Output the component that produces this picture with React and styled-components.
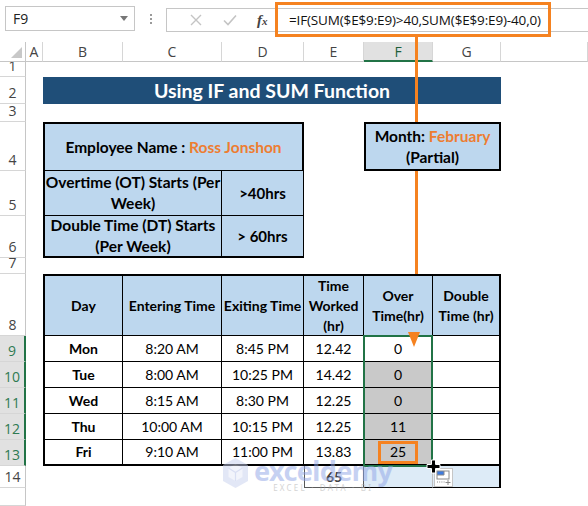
import React from 'react';
import styled, { createGlobalStyle } from 'styled-components';

const GlobalStyle = createGlobalStyle`
  html, body {
    margin: 0;
    padding: 0;
    background: #fff;
  }
  body {
    font-family: "Lato", "Open Sans", sans-serif;
  }
`;

const ORANGE = '#F58220';
const GREEN = '#217346';
const HEAD_BLUE = '#BDD7EE';
const THICK = '2px solid #000';
const THIN = '1px solid #000';

const Page = styled.div`
  position: relative;
  width: 588px;
  height: 506px;
  overflow: hidden;
  background: #fff;
`;

/* ---------- formula bar ---------- */

const FormulaBar = styled.div`
  height: 42px;
  display: flex;
  align-items: flex-start;
  padding-top: 6px;
  box-sizing: border-box;
  font-family: "Open Sans", "Noto Sans", sans-serif;
`;

const NameBox = styled.div`
  margin-left: 5px;
  width: 130px;
  height: 25px;
  box-sizing: border-box;
  border: 1px solid #C6C6C6;
  display: flex;
  align-items: center;
  justify-content: space-between;
  padding: 0 6px 0 7px;
  font-size: 14px;
  color: #222;
`;

const DropArrow = styled.span`
  width: 0;
  height: 0;
  border-left: 4px solid transparent;
  border-right: 4px solid transparent;
  border-top: 5px solid #777;
`;

const Grip = styled.div`
  width: 31px;
  height: 25px;
  display: flex;
  flex-direction: column;
  align-items: center;
  justify-content: center;
  gap: 2px;

  span {
    width: 2px;
    height: 2px;
    background: #9A9A9A;
  }
`;

const FxBox = styled.div`
  flex: 1;
  margin-top: 2px;
  height: 24px;
  box-sizing: border-box;
  border: 1px solid #C6C6C6;
  border-right: none;
  display: flex;
  align-items: center;
`;

const FxButtons = styled.div`
  width: 110px;
  display: flex;
  align-items: center;
  padding-left: 12px;
  box-sizing: border-box;
`;

const FxIcon = styled.span`
  width: ${p => p.$w}px;
  display: flex;
  justify-content: center;
  align-items: baseline;
  color: ${p => p.$color || '#C8C8C8'};
  font-family: "Liberation Serif", serif;
  font-style: italic;
  font-weight: 700;
  font-size: 15px;

  small {
    font-size: 11px;
  }
`;

const FormulaText = styled.div`
  flex: 1;
  height: 100%;
  display: flex;
  align-items: center;
  padding-left: 12px;
  font-family: "Open Sans", sans-serif;
  font-size: 13.5px;
  letter-spacing: -0.15px;
  color: #111;
`;

/* ---------- sheet grid ---------- */

const Sheet = styled.div`
  display: grid;
  grid-template-columns: 26px 17px 80px 99px 82px 60px 69px 68px 1fr;
  grid-template-rows: 20px 15px 27px 18px 49px 45px 42px 16px 62px repeat(5, 26px) 22px 1fr;
  height: 464px;
`;

const Corner = styled.div`
  grid-column: 1;
  grid-row: 1;
  border-right: 1px solid #C6C6C6;
  border-bottom: 1px solid #C6C6C6;
  position: relative;

  &::after {
    content: '';
    position: absolute;
    right: 3px;
    bottom: 3px;
    width: 0;
    height: 0;
    border-left: 11px solid transparent;
    border-bottom: 11px solid #C8C8C8;
  }
`;

const ColHead = styled.div`
  grid-column: ${p => p.$c};
  grid-row: 1;
  display: flex;
  align-items: center;
  justify-content: center;
  font-family: "Open Sans", sans-serif;
  font-size: 14px;
  color: ${p => (p.$active ? '#1E5E3A' : '#444')};
  background: ${p => (p.$active ? '#E1E1E1' : '#fff')};
  border-right: 1px solid #D6D6D6;
  border-bottom: ${p => (p.$active ? `2px solid ${GREEN}` : '1px solid #C6C6C6')};
  box-sizing: border-box;
`;

const RowHead = styled.div`
  grid-column: 1;
  grid-row: ${p => p.$r};
  display: flex;
  align-items: flex-end;
  justify-content: center;
  padding-bottom: 1px;
  font-family: "Open Sans", sans-serif;
  font-size: 14px;
  line-height: 18px;
  color: ${p => (p.$active ? '#2E7A52' : '#444')};
  background: ${p => (p.$active ? '#E1E1E1' : '#fff')};
  border-right: ${p => (p.$active ? `2px solid ${GREEN}` : '1px solid #C6C6C6')};
  border-bottom: 1px solid #D6D6D6;
  box-sizing: border-box;
`;

const Cell = styled.div`
  grid-column: ${p => p.$c} / span ${p => p.$cs || 1};
  grid-row: ${p => p.$r} / span ${p => p.$rs || 1};
  position: relative;
  display: flex;
  flex-direction: column;
  align-items: center;
  justify-content: center;
  text-align: center;
  white-space: nowrap;
  box-sizing: border-box;
  background: ${p => p.$bg || '#fff'};
  border-top: ${p => p.$bt || 'none'};
  border-left: ${p => p.$bl || 'none'};
  border-right: ${p => p.$br || THIN};
  border-bottom: ${p => p.$bb || THIN};
  font-size: ${p => p.$size || 14}px;
  line-height: ${p => (p.$size ? 21 : 20)}px;
  font-weight: ${p => (p.$bold ? 700 : 400)};
  color: ${p => p.$color || '#000'};
`;

const Title = styled.div`
  grid-column: 3 / span 6;
  grid-row: 3;
  background: #1F4E78;
  color: #fff;
  font-size: 19.5px;
  font-weight: 700;
  display: flex;
  align-items: center;
  justify-content: center;
`;

const Accent = styled.span`
  color: #ED7D31;
`;

const Selection = styled.div`
  grid-column: 7;
  grid-row: 10 / span 5;
  margin: -1px 0 -1px -1px;
  border: 2px solid ${GREEN};
  z-index: 3;
  pointer-events: none;
`;

const Highlight = styled.span`
  width: 40px;
  height: 23px;
  box-sizing: border-box;
  border: 3px solid ${ORANGE};
  display: flex;
  align-items: center;
  justify-content: center;
`;

/* ---------- overlays ---------- */

const OrangeFrame = styled.div`
  position: absolute;
  left: 275px;
  top: 2px;
  width: 276px;
  height: 35px;
  box-sizing: border-box;
  border: 3px solid ${ORANGE};
  z-index: 5;
`;

const Leader = styled.div`
  position: absolute;
  left: 415px;
  width: 3px;
  top: ${p => p.$top}px;
  height: ${p => p.$h}px;
  background: ${ORANGE};
  z-index: 5;
`;

const ArrowHead = styled.div`
  position: absolute;
  left: 408px;
  top: 332px;
  width: 0;
  height: 0;
  border-left: 6px solid transparent;
  border-right: 6px solid transparent;
  border-top: 15px solid ${ORANGE};
  z-index: 6;
`;

const Watermark = styled.div`
  position: absolute;
  left: 222px;
  top: 457px;
  display: flex;
  align-items: flex-start;
  gap: 5px;
  opacity: 0.5;
  z-index: 4;
  pointer-events: none;
`;

const WmText = styled.div`
  display: flex;
  flex-direction: column;
  align-items: center;
`;

const WmName = styled.span`
  font-family: "Noto Sans", sans-serif;
  font-weight: 700;
  font-size: 27px;
  line-height: 27px;
  color: #8FA4E6;
  letter-spacing: -0.6px;
`;

const WmTag = styled.span`
  font-family: "Noto Sans", sans-serif;
  font-size: 8px;
  line-height: 8px;
  letter-spacing: 2.2px;
  color: #A9A9A9;
`;

const FillCursor = styled.svg`
  position: absolute;
  left: 426px;
  top: 459px;
  z-index: 7;
`;

const QuickAnalysis = styled.svg`
  position: absolute;
  left: 434px;
  top: 468px;
  z-index: 6;
`;

const cols = ['A', 'B', 'C', 'D', 'E', 'F', 'G', ''];

const days = [
  ['Mon', '8:20 AM', '8:45 PM', '12.42', '0'],
  ['Tue', '8:00 AM', '10:25 PM', '14.42', '0'],
  ['Wed', '8:15 AM', '8:30 PM', '12.25', '0'],
  ['Thu', '10:00 AM', '10:15 PM', '12.25', '11'],
  ['Fri', '9:10 AM', '11:00 PM', '13.83', '25'],
];

const App = () => {
  return (
    <Page>
      <GlobalStyle />
      <FormulaBar>
        <NameBox>
          F9
          <DropArrow />
        </NameBox>
        <Grip>
          <span />
          <span />
          <span />
        </Grip>
        <FxBox>
          <FxButtons>
            <FxIcon $w={34}>
              <svg width="12" height="12" viewBox="0 0 12 12">
                <path d="M1 1 L11 11 M11 1 L1 11" stroke="#C4C4C4" strokeWidth="1.4" />
              </svg>
            </FxIcon>
            <FxIcon $w={36}>
              <svg width="14" height="12" viewBox="0 0 14 12">
                <path d="M1 6.5 L5 10.5 L13 1.5" stroke="#C4C4C4" strokeWidth="1.6" fill="none" />
              </svg>
            </FxIcon>
            <FxIcon $w={30} $color="#444">
              f<small>x</small>
            </FxIcon>
          </FxButtons>
          <FormulaText>=IF(SUM($E$9:E9)&gt;40,SUM($E$9:E9)-40,0)</FormulaText>
        </FxBox>
      </FormulaBar>

      <Sheet>
        <Corner />
        {cols.map((c, i) => (
          <ColHead key={i} $c={i + 2} $active={c === 'F'}>
            {c}
          </ColHead>
        ))}
        {Array.from({ length: 14 }, (_, i) => (
          <RowHead key={i} $r={i + 2} $active={i + 1 >= 9 && i + 1 <= 13}>
            {i + 1}
          </RowHead>
        ))}
        <RowHead $r={16} />

        <Title>Using IF and SUM Function</Title>

        <Cell $c={3} $cs={3} $r={5} $bg={HEAD_BLUE} $bold $size={15.5} $bt={THICK} $bl={THICK} $br={THICK}>
          <span>
            Employee Name : <Accent>Ross Jonshon</Accent>
          </span>
        </Cell>
        <Cell $c={3} $cs={2} $r={6} $bg={HEAD_BLUE} $bold $size={15.5} $bl={THICK}>
          <span>Overtime (OT) Starts (Per</span>
          <span>Week)</span>
        </Cell>
        <Cell $c={5} $r={6} $bg={HEAD_BLUE} $bold $size={15}>
          &gt;40hrs
        </Cell>
        <Cell $c={3} $cs={2} $r={7} $bg={HEAD_BLUE} $bold $size={15.5} $bl={THICK} $bb={THICK}>
          <span>Double Time (DT) Starts</span>
          <span>(Per Week)</span>
        </Cell>
        <Cell $c={5} $r={7} $bg={HEAD_BLUE} $bold $size={15} $bb={THICK}>
          &gt; 60hrs
        </Cell>

        <Cell $c={7} $cs={2} $r={5} $bg={HEAD_BLUE} $bold $size={15.5} $bt={THICK} $bl={THICK} $br={THICK} $bb={THICK}>
          <span>
            Month: <Accent>February</Accent>
          </span>
          <span>(Partial)</span>
        </Cell>

        <Cell $c={3} $r={9} $bg={HEAD_BLUE} $bold $bt={THICK} $bl={THICK}>Day</Cell>
        <Cell $c={4} $r={9} $bg={HEAD_BLUE} $bold $bt={THICK}>Entering Time</Cell>
        <Cell $c={5} $r={9} $bg={HEAD_BLUE} $bold $bt={THICK}>Exiting Time</Cell>
        <Cell $c={6} $r={9} $bg={HEAD_BLUE} $bold $bt={THICK}>
          <span>Time</span>
          <span>Worked</span>
          <span>(hr)</span>
        </Cell>
        <Cell $c={7} $r={9} $bg={HEAD_BLUE} $bold $bt={THICK}>
          <span>Over</span>
          <span>Time(hr)</span>
        </Cell>
        <Cell $c={8} $r={9} $bg={HEAD_BLUE} $bold $bt={THICK} $br={THICK}>
          <span>Double</span>
          <span>Time (hr)</span>
        </Cell>

        {days.map((d, i) => {
          const r = 10 + i;
          const last = i === days.length - 1;
          const bb = last ? THICK : THIN;
          return (
            <React.Fragment key={d[0]}>
              <Cell $c={3} $r={r} $bold $bl={THICK} $bb={bb}>{d[0]}</Cell>
              <Cell $c={4} $r={r} $bb={bb}>{d[1]}</Cell>
              <Cell $c={5} $r={r} $bb={bb}>{d[2]}</Cell>
              <Cell $c={6} $r={r} $bb={bb}>{d[3]}</Cell>
              <Cell $c={7} $r={r} $bb={bb} $bg={i === 0 ? '#fff' : '#C9C9C9'}>
                {last ? <Highlight>{d[4]}</Highlight> : d[4]}
              </Cell>
              <Cell $c={8} $r={r} $bb={bb} $br={THICK} />
            </React.Fragment>
          );
        })}
        <Selection />

        <Cell $c={6} $r={15} $bold $color="#404040" $bl="1px solid #595959" $br="1px solid #595959" $bb="1px solid #595959">
          65
        </Cell>
        <Cell $c={7} $r={15} $bg="#DDEBF7" $br="1px solid #BFBFBF" />
        <Cell $c={8} $r={15} $bg="#DDEBF7" $br={THICK} />
      </Sheet>

      <OrangeFrame />
      <Leader $top={37} $h={85} />
      <Leader $top={171} $h={103} />
      <ArrowHead />

      <Watermark>
        <svg width="27" height="32" viewBox="0 0 27 32">
          <path d="M13.5 1 L26 8 L26 24 L13.5 31 L1 24 L1 8 Z" fill="#C7D0EE" />
          <path d="M13.5 7 L20.5 11 L20.5 20 L13.5 24 L6.5 20 L6.5 11 Z" fill="#E6EAF8" />
          <path d="M13.5 15.5 L20.5 11 M13.5 15.5 L6.5 11 M13.5 15.5 L13.5 24" stroke="#B5C0E8" strokeWidth="1.2" />
        </svg>
        <WmText>
          <WmName>exceldemy</WmName>
          <WmTag>EXCEL · DATA · BI</WmTag>
        </WmText>
      </Watermark>

      <FillCursor width="15" height="15" viewBox="0 0 15 15">
        <path d="M5.5 1 H9.5 V5.5 H14 V9.5 H9.5 V14 H5.5 V9.5 H1 V5.5 H5.5 Z" fill="#000" stroke="#fff" strokeWidth="1" />
      </FillCursor>

      <QuickAnalysis width="19" height="19" viewBox="0 0 19 19">
        <rect x="0.5" y="0.5" width="18" height="18" fill="#fff" stroke="#C6C6C6" />
        <rect x="3" y="3" width="7" height="4" fill="#3D7BE0" />
        <rect x="3" y="3" width="12" height="8" fill="none" stroke="#8A8A8A" />
        <path d="M10 3 V7 H3" stroke="#8A8A8A" fill="none" />
        <path d="M3 14 H11" stroke="#8A8A8A" strokeDasharray="1 1.2" />
        <path d="M14 12 V17 M11.5 14.5 H16.5" stroke="#8A8A8A" />
      </QuickAnalysis>
    </Page>
  );
};

export default App;
